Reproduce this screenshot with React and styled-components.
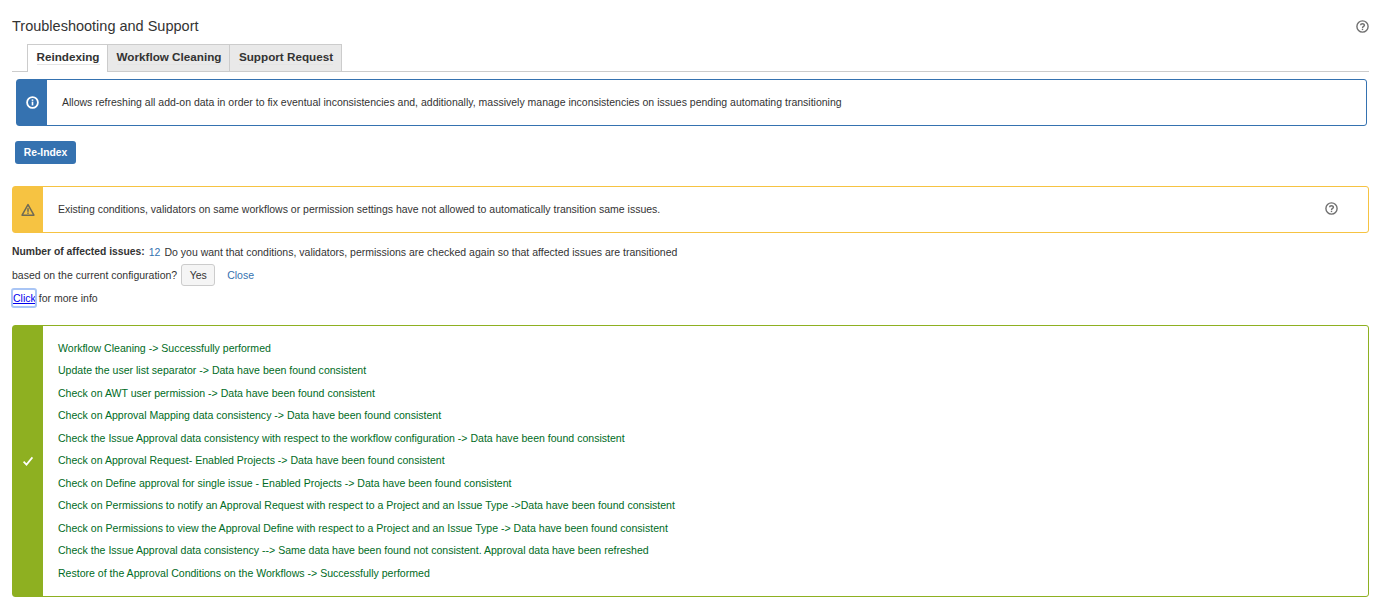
import React from "react";
import styled, { createGlobalStyle } from "styled-components";

const GlobalStyle = createGlobalStyle`
  html, body {
    margin: 0;
    padding: 0;
    background: #ffffff;
  }
  body {
    font-family: "Liberation Sans", Arial, sans-serif;
    font-size: 12px;
    color: #333333;
  }
`;

const Page = styled.div`
  width: 1381px;
  height: 607px;
  box-sizing: border-box;
  padding: 17px 12px 0 12px;
  overflow: hidden;
`;

const Header = styled.div`
  display: flex;
  justify-content: space-between;
  align-items: center;
  height: 18px;
`;

const Title = styled.h2`
  margin: 0;
  font-size: 14.5px;
  font-weight: 400;
  line-height: 18px;
  color: #333333;
`;

const HelpIcon = styled.svg`
  width: 13px;
  height: 13px;
  display: block;
  margin-right: ${({ $right }) => $right || 0}px;
  margin-bottom: ${({ $bottom }) => $bottom || 0}px;
`;

const TabBar = styled.div`
  display: flex;
  height: 27px;
  margin-top: 9px;
  padding-left: 15px;
  border-bottom: 1px solid #cccccc;
`;

const Tab = styled.div`
  display: flex;
  align-items: center;
  justify-content: center;
  box-sizing: border-box;
  width: ${({ $width }) => $width}px;
  height: 28px;
  padding: 0 0 ${({ $active }) => ($active ? "3px" : "2px")} 1px;
  border: 1px solid #cccccc;
  border-bottom: ${({ $active }) => ($active ? "none" : "1px solid #cccccc")};
  border-left-width: ${({ $first }) => ($first ? "1px" : "0")};
  background: ${({ $active }) => ($active ? "#ffffff" : "#e9e9e9")};
  font-size: 11.7px;
  font-weight: 700;
  color: #333333;
`;

const TabLabel = styled.span`
  line-height: 15px;
  border-bottom: 1px solid #e4e4e4;
`;

const Message = styled.div`
  display: flex;
  box-sizing: border-box;
  border: 1px solid ${({ $color }) => $color};
  border-radius: 3px;
  background: #ffffff;
  min-height: ${({ $height }) => $height}px;
  margin: ${({ $margin }) => $margin || "0"};
`;

const MessageSide = styled.div`
  flex: 0 0 30px;
  display: flex;
  align-items: center;
  justify-content: center;
  background: ${({ $color }) => $color};
`;

const MessageBody = styled.div`
  flex: 1;
  display: flex;
  align-items: center;
  justify-content: space-between;
  padding: ${({ $padding }) => $padding};
  font-size: 10.5px;
  color: ${({ $color }) => $color || "#333333"};
`;

const PrimaryButton = styled.button`
  display: block;
  width: 61px;
  height: 23px;
  margin: 15px 0 0 3px;
  padding: 0;
  border: none;
  border-radius: 3px;
  background: #3572b0;
  color: #ffffff;
  font-family: inherit;
  font-size: 10.3px;
  font-weight: 700;
`;

const InfoLine = styled.div`
  display: flex;
  align-items: center;
  height: 23px;
  margin-top: ${({ $top }) => $top || 0}px;
  font-size: 10.5px;
  white-space: pre;
`;

const Strong = styled.b`
  font-size: 10.35px;
  font-weight: 700;
`;

const Count = styled.span`
  margin: 0 4px;
  color: #3572b0;
`;

const SmallButton = styled.button`
  width: 34px;
  height: 22px;
  margin-left: 4px;
  padding: 0;
  box-sizing: border-box;
  border: 1px solid #cccccc;
  border-radius: 3px;
  background: #f5f5f5;
  color: #333333;
  font-family: inherit;
  font-size: 10.5px;
`;

const CloseLink = styled.a`
  margin-left: 12px;
  color: #3572b0;
`;

const FocusLink = styled.a`
  display: inline-block;
  padding: 3px 0 3px 1px;
  margin-right: 3px;
  border-radius: 2px;
  outline: 2px solid #a9c5f5;
  outline-offset: -1px;
  color: #0000ee;
  text-decoration: underline;
`;

const ResultList = styled.ul`
  list-style: none;
  margin: 0;
  padding: 0;
  font-size: 10.55px;
`;

const ResultItem = styled.li`
  height: 22.5px;
  line-height: 22.5px;
  white-space: nowrap;
`;

const Info = () => (
  <svg width="13" height="13" viewBox="0 0 13 13">
    <circle cx="6.5" cy="6.5" r="5.4" fill="none" stroke="#fff" strokeWidth="1.8" />
    <rect x="5.7" y="5.6" width="1.6" height="3.8" fill="#fff" />
    <rect x="5.7" y="3.4" width="1.6" height="1.5" fill="#fff" />
  </svg>
);

const Warning = () => (
  <svg width="14" height="14" viewBox="0 0 13 13">
    <path d="M6.5 1.5 L12 11.3 H1 Z" fill="none" stroke="#6f6a55" strokeWidth="1.4" strokeLinejoin="round" />
    <rect x="5.8" y="4.8" width="1.4" height="3.4" fill="#6f6a55" />
    <rect x="5.8" y="8.8" width="1.4" height="1.3" fill="#6f6a55" />
  </svg>
);

const Check = () => (
  <svg width="12" height="12" viewBox="0 0 12 12">
    <path d="M1.6 6.6 L4.5 9.6 L10.4 2.4" fill="none" stroke="#fff" strokeWidth="1.7" />
  </svg>
);

const Help = ({ right, bottom }) => (
  <HelpIcon $right={right} $bottom={bottom} viewBox="0 0 13 13">
    <circle cx="6.5" cy="6.5" r="5.6" fill="none" stroke="#707070" strokeWidth="1.4" />
    <path d="M4.6 5.2 C4.6 3.2 8.4 3.2 8.4 5.2 C8.4 6.5 6.5 6.4 6.5 8" fill="none" stroke="#707070" strokeWidth="1.4" />
    <rect x="5.8" y="8.7" width="1.4" height="1.4" fill="#707070" />
  </HelpIcon>
);

const results = [
  "Workflow Cleaning -> Successfully performed",
  "Update the user list separator -> Data have been found consistent",
  "Check on AWT user permission -> Data have been found consistent",
  "Check on Approval Mapping data consistency -> Data have been found consistent",
  "Check the Issue Approval data consistency with respect to the workflow configuration -> Data have been found consistent",
  "Check on Approval Request- Enabled Projects -> Data have been found consistent",
  "Check on Define approval for single issue - Enabled Projects -> Data have been found consistent",
  "Check on Permissions to notify an Approval Request with respect to a Project and an Issue Type ->Data have been found consistent",
  "Check on Permissions to view the Approval Define with respect to a Project and an Issue Type -> Data have been found consistent",
  "Check the Issue Approval data consistency --> Same data have been found not consistent. Approval data have been refreshed",
  "Restore of the Approval Conditions on the Workflows -> Successfully performed",
];

const App = () => (
  <>
    <GlobalStyle />
    <Page>
      <Header>
        <Title>Troubleshooting and Support</Title>
        <Help />
      </Header>
      <TabBar>
        <Tab $active $first $width={81}>
          <TabLabel>Reindexing</TabLabel>
        </Tab>
        <Tab $width={122}>
          <TabLabel>Workflow Cleaning</TabLabel>
        </Tab>
        <Tab $width={112}>
          <TabLabel>Support Request</TabLabel>
        </Tab>
      </TabBar>
      <Message $color="#3572b0" $height={47} $margin="7px 2px 0 4px">
        <MessageSide $color="#3572b0">
          <Info />
        </MessageSide>
        <MessageBody $padding="0 15px 2px">
          Allows refreshing all add-on data in order to fix eventual inconsistencies and, additionally, massively manage inconsistencies on issues pending automating transitioning
        </MessageBody>
      </Message>
      <PrimaryButton>Re-Index</PrimaryButton>
      <Message $color="#f6c342" $height={47} $margin="22px 0 0 0">
        <MessageSide $color="#f6c342">
          <Warning />
        </MessageSide>
        <MessageBody $padding="0 15px 2px">
          Existing conditions, validators on same workflows or permission settings have not allowed to automatically transition same issues.
          <Help right={15} bottom={1} />
        </MessageBody>
      </Message>
      <InfoLine $top={7}>
        <Strong>Number of affected issues:</Strong>
        <Count>12</Count>
        Do you want that conditions, validators, permissions are checked again so that affected issues are transitioned
      </InfoLine>
      <InfoLine>
        based on the current configuration?
        <SmallButton>Yes</SmallButton>
        <CloseLink>Close</CloseLink>
      </InfoLine>
      <InfoLine>
        <FocusLink href="#">Click</FocusLink>for more info
      </InfoLine>
      <Message $color="#8eb021" $height={272} $margin="16px 0 0 0">
        <MessageSide $color="#8eb021">
          <Check />
        </MessageSide>
        <MessageBody $padding="10px 15px 11.5px" $color="#006b24">
          <ResultList>
            {results.map((line) => (
              <ResultItem key={line}>{line}</ResultItem>
            ))}
          </ResultList>
        </MessageBody>
      </Message>
    </Page>
  </>
);

export default App;
